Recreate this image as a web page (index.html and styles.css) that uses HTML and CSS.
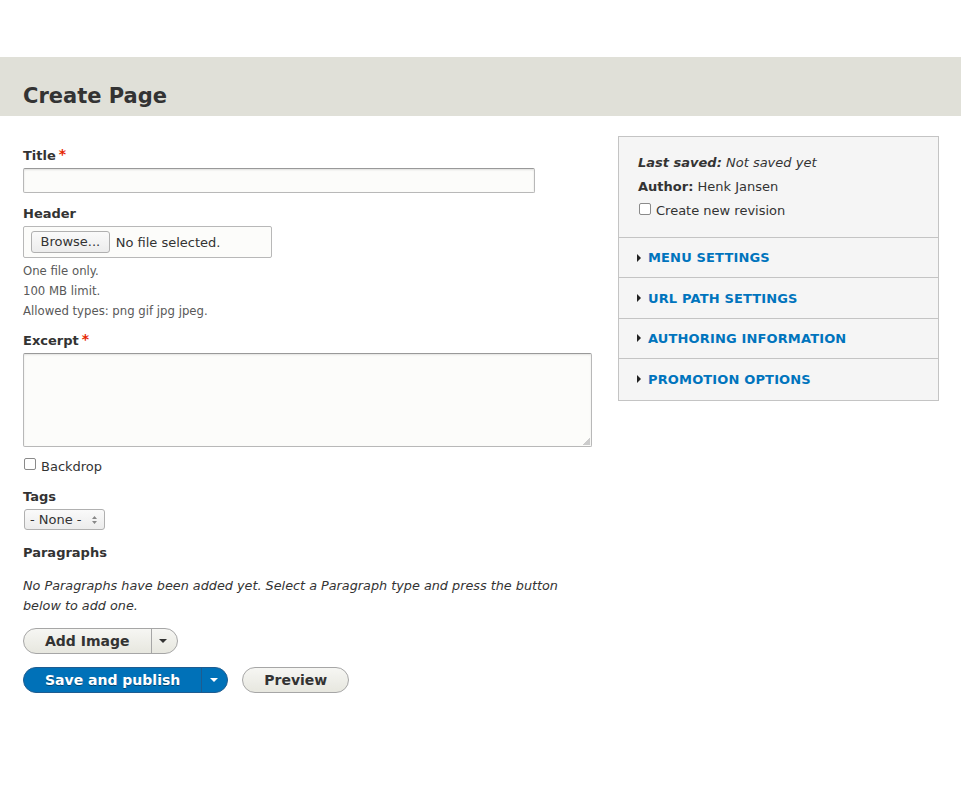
FILE: index.html
```html
<!DOCTYPE html>
<html lang="en">
<head>
<meta charset="utf-8">
<title>Create Page</title>
<link rel="stylesheet" href="styles.css">
</head>
<body>
<div class="top-space"></div>
<header class="page-header">
  <h1>Create Page</h1>
</header>
<main class="layout">
  <form class="main-col">
    <div class="field">
      <label class="label">Title<span class="req">*</span></label>
      <div class="text-input title-input"></div>
    </div>
    <div class="field field-file">
      <label class="label">Header</label>
      <div class="file-input"><span class="browse">Browse...</span><span class="nofile">No file selected.</span></div>
      <div class="desc">
        <div>One file only.</div>
        <div>100 MB limit.</div>
        <div>Allowed types: png gif jpg jpeg.</div>
      </div>
    </div>
    <div class="field field-excerpt">
      <label class="label">Excerpt<span class="req">*</span></label>
      <div class="textarea"><span class="grip"></span></div>
    </div>
    <div class="field check-field">
      <span class="checkbox"></span><span>Backdrop</span>
    </div>
    <div class="field field-tags">
      <label class="label">Tags</label>
      <div class="select">- None -<span class="arrows"><svg width="7" height="10" viewBox="0 0 7 10"><path d="M3.5 1 L6 4 H1 Z M1 6 H6 L3.5 9 Z" fill="#888"/></svg></span></div>
    </div>
    <div class="field field-paragraphs">
      <label class="label">Paragraphs</label>
      <p class="empty">No Paragraphs have been added yet. Select a Paragraph type and press the button below to add one.</p>
    </div>
    <div class="dropbutton">
      <span class="db-main">Add Image</span><span class="db-toggle"><span class="caret"></span></span>
    </div>
    <div class="actions">
      <div class="dropbutton primary">
        <span class="db-main">Save and publish</span><span class="db-toggle"><span class="caret"></span></span>
      </div>
      <span class="button">Preview</span>
    </div>
  </form>
  <aside class="sidebar">
    <div class="meta">
      <div class="meta-line"><em><strong>Last saved:</strong> Not saved yet</em></div>
      <div class="meta-line"><strong>Author:</strong> Henk Jansen</div>
      <div class="meta-line check-line"><span class="checkbox"></span>Create new revision</div>
    </div>
    <div class="section"><span class="tri"></span>Menu settings</div>
    <div class="section"><span class="tri"></span>URL path settings</div>
    <div class="section"><span class="tri"></span>Authoring information</div>
    <div class="section"><span class="tri"></span>Promotion options</div>
  </aside>
</main>
</body>
</html>
```
FILE: styles.css
```css
* { box-sizing: border-box; }
body {
  margin: 0;
  font-family: "DejaVu Sans", sans-serif;
  font-size: 13px;
  color: #333;
  background: #fff;
}
.top-space { height: 57px; }
.page-header {
  background: #e0e0d8;
  height: 59px;
  padding: 25px 23px 0;
}
.page-header h1 {
  margin: 0;
  font-size: 21px;
  line-height: 28px;
  font-weight: bold;
  color: #333;
}
.layout {
  display: grid;
  grid-template-columns: 569px 321px;
  column-gap: 26px;
  padding: 0 23px;
  align-items: start;
}
.main-col { padding-top: 31px; }
.field { margin-bottom: 12px; }
.label {
  display: block;
  font-weight: bold;
  line-height: 18px;
  margin-bottom: 3px;
}
.req {
  color: #e62600;
  margin-left: 3px;
  font-size: 14px;
  vertical-align: top;
  line-height: 14px;
}
.text-input {
  height: 25px;
  border: 1px solid #b8b8b8;
  border-top-color: #999;
  border-radius: 2px;
  background: #fcfcfa;
  box-shadow: inset 0 1px 2px rgba(0,0,0,0.12);
}
.title-input { width: 512px; }
.file-input {
  width: 249px;
  height: 32px;
  border: 1px solid #b8b8b8;
  border-radius: 2px;
  background: #fcfcfa;
  display: flex;
  align-items: center;
  padding-left: 7px;
}
.browse {
  display: inline-block;
  height: 22px;
  line-height: 20px;
  padding: 0 8.5px;
  border: 1px solid #b0b0b0;
  border-radius: 3px;
  background: linear-gradient(#fafafa, #ececec);
  font-size: 13px;
  color: #333;
}
.nofile { margin-left: 6px; color: #333; }
.desc {
  font-size: 11.7px;
  line-height: 20px;
  color: #595959;
  margin-top: 3px;
}
.field-file { margin-bottom: 11px; }
.field-excerpt { margin-bottom: 10px; }
.textarea {
  position: relative;
  width: 569px;
  height: 94px;
  border: 1px solid #b8b8b8;
  border-top-color: #999;
  border-radius: 2px;
  background: #fcfcfa;
  box-shadow: inset 0 1px 2px rgba(0,0,0,0.1);
}
.grip {
  position: absolute;
  right: 1px;
  bottom: 1px;
  width: 7px;
  height: 7px;
  background: linear-gradient(135deg, transparent 50%, #ccc 50%);
}
.check-field {
  display: flex;
  align-items: center;
  height: 18px;
  margin-bottom: 13px;
}
.checkbox {
  display: inline-block;
  width: 12px;
  height: 12px;
  border: 1px solid #8a8a8a;
  border-radius: 2px;
  background: #fff;
  margin: 0 5px 0 1px;
  position: relative;
  top: -2px;
}
.field-tags { margin-bottom: 14px; }
.select {
  display: inline-flex;
  align-items: center;
  width: 81px;
  height: 21px;
  margin-left: 1px;
  padding-left: 5px;
  border: 1px solid #b0b0b0;
  border-radius: 3px;
  background: linear-gradient(#fafafa, #ececec);
  color: #333;
  position: relative;
}
.arrows {
  margin-left: auto;
  margin-right: 6px;
  display: flex;
}
.empty {
  margin: 14px 0 0;
  font-style: italic;
  font-size: 12.8px;
  line-height: 20px;
}
.field-paragraphs { margin-bottom: 12px; }
.dropbutton {
  display: inline-flex;
  height: 26px;
  border: 1px solid #a6a6a6;
  border-radius: 20em;
  background: linear-gradient(#f6f6f3, #e7e7df);
  font-weight: bold;
  font-size: 14px;
  color: #333;
  overflow: hidden;
}
.db-main {
  padding: 0 21px;
  line-height: 24px;
}
.db-toggle {
  width: 26px;
  border-left: 1px solid #a6a6a6;
  display: flex;
  align-items: center;
  justify-content: center;
}
.caret {
  width: 0;
  height: 0;
  border-left: 4px solid transparent;
  border-right: 4px solid transparent;
  border-top: 4px solid #333;
  margin-left: -2px;
}
.actions {
  display: flex;
  align-items: center;
  gap: 14px;
  margin-top: 13px;
}
.dropbutton.primary {
  background: #0071b8;
  border-color: #1e5c90;
  color: #fff;
  text-shadow: 0 1px 0 rgba(0,0,0,0.4);
}
.dropbutton.primary .db-toggle { border-left-color: #1e5c90; }
.dropbutton.primary .caret { border-top-color: #fff; }
.button {
  display: inline-block;
  height: 26px;
  line-height: 24px;
  padding: 0 21px;
  border: 1px solid #a6a6a6;
  border-radius: 20em;
  background: linear-gradient(#f6f6f3, #e7e7df);
  font-weight: bold;
  font-size: 14px;
  color: #333;
}
.sidebar {
  margin-top: 20px;
  border: 1px solid #c4c4c4;
  background: #f5f5f5;
}
.meta {
  padding: 17px 19px 17px;
  border-bottom: 1px solid #c4c4c4;
}
.meta-line {
  line-height: 18px;
  margin-bottom: 6px;
}
.meta-line:last-child { margin-bottom: 0; }
.check-line { display: flex; align-items: center; }
.section {
  height: 40.4px;
  display: flex;
  align-items: center;
  padding-left: 18px;
  border-bottom: 1px solid #c4c4c4;
  color: #0074bd;
  font-weight: bold;
  text-transform: uppercase;
  letter-spacing: 0.15px;
  font-size: 13px;
}
.section:last-child { border-bottom: 0; }
.tri {
  width: 0;
  height: 0;
  border-top: 4px solid transparent;
  border-bottom: 4px solid transparent;
  border-left: 4px solid #222;
  margin-right: 7px;
}
```
